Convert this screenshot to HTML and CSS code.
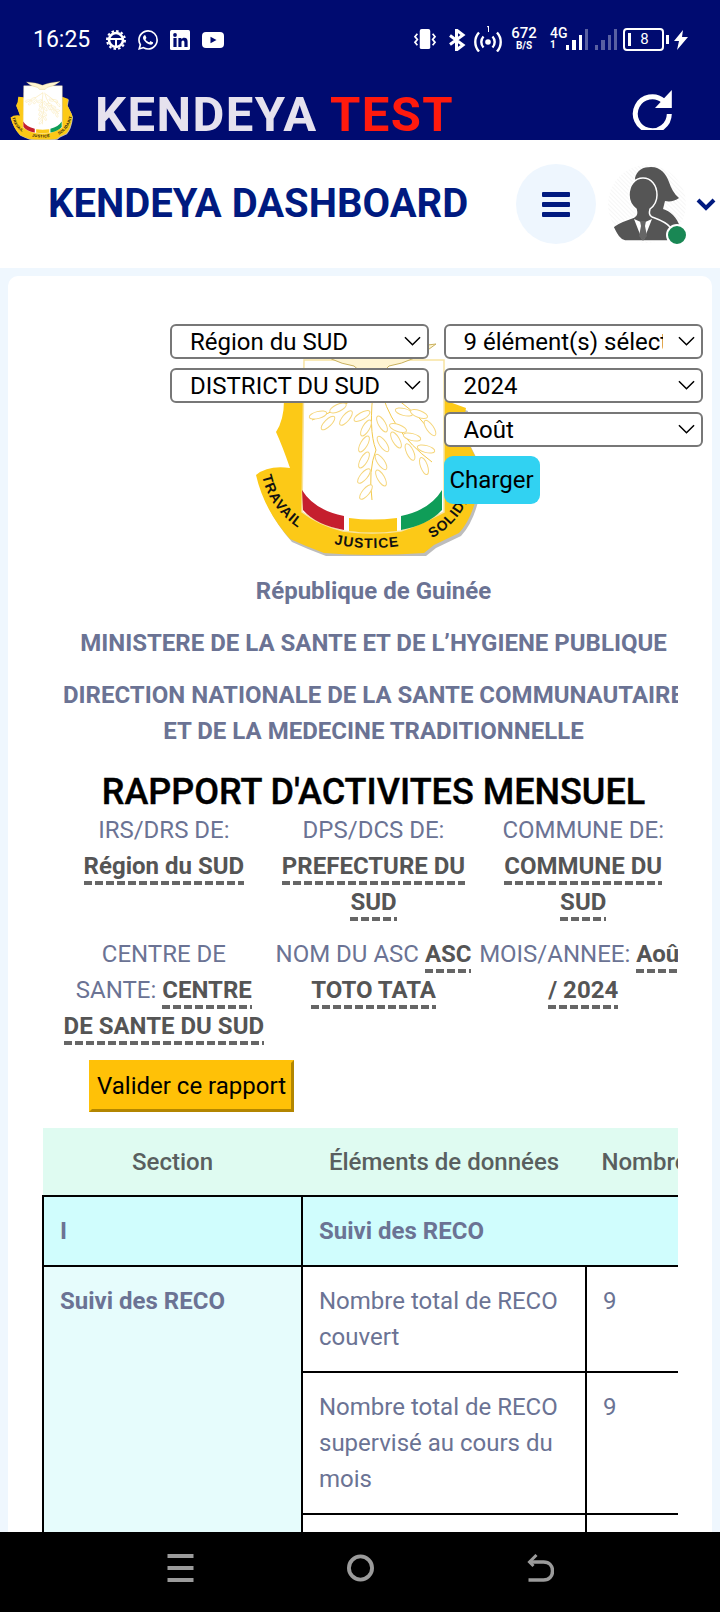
FILE: index.html
```html
<!DOCTYPE html>
<html lang="fr">
<head>
<meta charset="utf-8">
<title>Kendeya Dashboard</title>
<link rel="stylesheet" href="styles.css">
</head>
<body>
<div class="screen">
  <div class="status">
    <span class="time">16:25</span>
    <svg class="ic-gear" viewBox="0 0 20 20"><circle cx="10" cy="10" r="7" fill="none" stroke="#fff" stroke-width="2.6"/><circle cx="10" cy="10" r="9" fill="none" stroke="#fff" stroke-width="2" stroke-dasharray="2.5 2.2"/><path d="M4 9h12M10 9v7" stroke="#fff" stroke-width="2" fill="none"/></svg>
    <svg class="ic-soc" viewBox="0 0 24 24"><path fill="#fff" d="M17.472 14.382c-.297-.149-1.758-.867-2.03-.967-.273-.099-.471-.148-.67.15-.197.297-.767.966-.94 1.164-.173.199-.347.223-.644.075-.297-.15-1.255-.463-2.39-1.475-.883-.788-1.48-1.761-1.653-2.059-.173-.297-.018-.458.13-.606.134-.133.298-.347.446-.52.149-.174.198-.298.298-.497.099-.198.05-.371-.025-.52-.075-.149-.669-1.612-.916-2.207-.242-.579-.487-.5-.669-.51-.173-.008-.371-.01-.57-.01-.198 0-.52.074-.792.372-.272.297-1.04 1.016-1.04 2.479 0 1.462 1.065 2.875 1.213 3.074.149.198 2.096 3.2 5.077 4.487.709.306 1.262.489 1.694.625.712.227 1.36.195 1.871.118.571-.085 1.758-.719 2.006-1.413.248-.694.248-1.289.173-1.413-.074-.124-.272-.198-.57-.347m-5.421 7.403h-.004a9.87 9.87 0 01-5.031-1.378l-.361-.214-3.741.982.998-3.648-.235-.374a9.86 9.86 0 01-1.51-5.26c.001-5.45 4.436-9.884 9.888-9.884 2.64 0 5.122 1.03 6.988 2.898a9.825 9.825 0 012.893 6.994c-.003 5.45-4.437 9.884-9.885 9.884m8.413-18.297A11.815 11.815 0 0012.05 0C5.495 0 .16 5.335.157 11.892c0 2.096.547 4.142 1.588 5.945L.057 24l6.305-1.654a11.882 11.882 0 005.683 1.448h.005c6.554 0 11.89-5.335 11.893-11.893a11.821 11.821 0 00-3.48-8.413Z"/></svg>
    <svg class="ic-soc" viewBox="0 0 20 20"><rect width="20" height="20" rx="1.5" fill="#fff"/><circle cx="5" cy="5" r="1.9" fill="#000b70"/><path fill="#000b70" d="M3.4 8h3.2v9H3.4zM8.4 8h3v1.3c.6-.9 1.6-1.5 2.9-1.5 2.4 0 3.3 1.6 3.3 4V17h-3.2v-4.6c0-1.2-.4-2-1.4-2-1.100 0-1.500.9-1.500 2V17H8.400z"/></svg>
    <svg class="ic-yt" viewBox="0 0 22 16"><rect width="22" height="16" rx="4" fill="#fff"/><path d="M8.500 4.800 14.500 8l-6 3.200z" fill="#000b70"/></svg>
    <span class="grow"></span>
    <svg class="ic-vib" viewBox="0 0 24 22"><rect x="6.500" y="0" width="11" height="21" rx="2" fill="#fff"/><path d="M4 5 1.500 8 4 11 1.500 14 4 17M20 5l2.500 3-2.500 3 2.500 3-2.500 3" fill="none" stroke="#fff" stroke-width="1.800"/></svg>
    <svg class="ic-bt" viewBox="0 0 18 22"><path d="M2 6.500 15 16l-6.500 5V1L15 6 2 15.500" fill="none" stroke="#fff" stroke-width="3"/></svg>
    <svg class="ic-hot" viewBox="0 0 28 26"><circle cx="14" cy="16" r="2.800" fill="#fff"/><path d="M9.500 10.500a8 8 0 0 0 0 11M18.500 10.500a8 8 0 0 1 0 11M5 6.500a14 14 0 0 0 0 19M23 6.500a14 14 0 0 1 0 19" fill="none" stroke="#fff" stroke-width="2.400"/><path d="M13 1l1.500-1v6" fill="none" stroke="#fff" stroke-width="1"/></svg>
    <span class="speed"><b>672</b><i>B/S</i></span>
    <span class="net"><b>4G</b><i>1</i></span>
    <span class="bars">
      <span class="bar b1"></span><span class="bar b2"></span><span class="bar b3"></span><span class="bar b4 dim"></span>
    </span>
    <span class="bars second">
      <span class="bar b1 dim"></span><span class="bar b2 dim"></span><span class="bar b3 dim"></span><span class="bar b4 dim"></span>
    </span>
    <span class="battery"><span class="bat-level"></span><span class="bat-num">8</span></span>
    <span class="bat-tip"></span>
    <svg class="ic-bolt" viewBox="0 0 14 20"><path d="M9 0 0 11h5l-2 9 11-13H8z" fill="#fff"/></svg>
  </div>

  <div class="appbar">
    <svg class="logo-small" viewBox="0 0 240 216"><use href="#coat"/></svg>
    <span class="brand">KENDEYA <span class="brand-test">TEST</span></span>
    <span class="grow"></span>
    <svg class="ic-refresh" viewBox="0 0 40 40"><path d="M31.500 11A17 17 0 1 0 37.300 24" fill="none" stroke="#fff" stroke-width="5"/><path d="M39.800 0v18H23z" fill="#fff"/></svg>
  </div>

  <header class="topbar">
    <h1 class="top-title">KENDEYA DASHBOARD</h1>
    <button class="menu-btn" aria-label="Menu"><span></span><span></span><span></span></button>
    <span class="avatar">
      <svg class="avatar-img" viewBox="0 0 80 80">
        <defs><pattern id="hatch" width="3" height="3" patternUnits="userSpaceOnUse" patternTransform="rotate(45)"><path d="M0 0h3" stroke="#eee" stroke-width="1"/></pattern></defs>
        <circle cx="40" cy="40" r="39" fill="url(#hatch)"/>
        <path d="M28 14C30 6 36 3 44 3c10 0 15 7 18 15 2 6 5 12 10 16-4 3-9 4-14 3l-2 8c7 2 14 8 17 18v14H40z" fill="#555"/>
        <path d="M6 63c5-5 13-7 21-10 3-2 3-4 2-8-4-3-7-8-7-14 0-10 6-17 14-17s14 7 14 17c0 6-3 11-7 14-1 4-1 6 2 8 8 3 14 5 18 10l-2 14H18C12 76 9 69 6 63Z" fill="#555" stroke="#fff" stroke-width="1.500"/>
        <path d="M27 55l9 23 9-23-9 4z" fill="#fff"/><path d="M33 57h6l-1 5 2 10-4 5-4-5 2-10z" fill="#666"/>
      </svg>
      <span class="online"></span>
    </span>
    <svg class="chev" viewBox="0 0 20 14"><path d="M2 3l8 8 8-8" fill="none" stroke="#001a80" stroke-width="4"/></svg>
  </header>

  <main class="page">
    <section class="card">
      <form class="filters">
        <select class="sel"><option>Région du SUD</option></select>
        <select class="sel"><option>9 élément(s) sélectionné(s)</option></select>
        <select class="sel"><option>DISTRICT DU SUD</option></select>
        <select class="sel"><option>2024</option></select>
        <select class="sel sel-col2"><option>Août</option></select>
        <button type="button" class="load sel-col2">Charger</button>
      </form>

      <div class="clip">
        <svg class="emblem" viewBox="0 0 240 216">
          <defs>
            <ellipse id="leaf" rx="9" ry="3.500" fill="#fff" stroke="#f5d67c" stroke-width="1"/>
            <path id="sil" d="M30 60L50 62V150H190V60L212 68 208 90 222 118 227 132Q222 175 205 193L180 205 170 213Q115 217 70 213L52 206 36 199Q10 170 2 135 14 125 36 128 28 105 22 92 30 80 30 60Z"/>
            <path id="pathL" d="M8 136Q16 172 52 193"/>
            <path id="pathM" d="M80 204Q118 212 156 204"/>
            <path id="pathR" d="M178 198Q212 180 226 130"/>
            <g id="coat">
              <use href="#sil" fill="#bdbdbd" transform="translate(2 3)"/>
              <use href="#sil" fill="#fcc917"/>
              <path d="M50 20H190V172Q165 185 147 191 118 195 89 191 65 185 48 172Z" fill="#fff" stroke="#f7e3a1" stroke-width="1.500"/>
              <path d="M60 6Q95 8 118 18 140 8 182 4 160 22 135 26L128 33H108L100 26Q75 22 60 6Z" fill="#fff5d2" stroke="#c9b15f" stroke-width="1"/>
              <g fill="none" stroke="#f2c94c" stroke-width="1">
                <path d="M120 45Q90 68 58 80M120 45Q114 90 122 110 114 130 118 160M126 45Q135 90 178 122M130 50Q160 70 174 88"/>
              </g>
              <use href="#leaf" transform="translate(64 75) rotate(-15)"/>
              <use href="#leaf" transform="translate(74 83) rotate(-45)"/>
              <use href="#leaf" transform="translate(84 68) rotate(-25)"/>
              <use href="#leaf" transform="translate(92 78) rotate(-50)"/>
              <use href="#leaf" transform="translate(108 76) rotate(-30)"/>
              <use href="#leaf" transform="translate(112 88) rotate(-60)"/>
              <use href="#leaf" transform="translate(128 84) rotate(60)"/>
              <use href="#leaf" transform="translate(110 104) rotate(-60)"/>
              <use href="#leaf" transform="translate(129 104) rotate(55)"/>
              <use href="#leaf" transform="translate(110 120) rotate(-60)"/>
              <use href="#leaf" transform="translate(127 122) rotate(55)"/>
              <use href="#leaf" transform="translate(110 136) rotate(-50)"/>
              <use href="#leaf" transform="translate(127 138) rotate(60)"/>
              <use href="#leaf" transform="translate(112 152) rotate(-50)"/>
              <use href="#leaf" transform="translate(144 88) rotate(20)"/>
              <use href="#leaf" transform="translate(142 100) rotate(60)"/>
              <use href="#leaf" transform="translate(158 97) rotate(15)"/>
              <use href="#leaf" transform="translate(156 112) rotate(65)"/>
              <use href="#leaf" transform="translate(172 109) rotate(15)"/>
              <use href="#leaf" transform="translate(170 126) rotate(70)"/>
              <use href="#leaf" transform="translate(150 72) rotate(15)"/>
              <use href="#leaf" transform="translate(165 74) rotate(20)"/>
              <use href="#leaf" transform="translate(176 88) rotate(55)"/>
              <path d="M48 150Q60 170 90 176V190Q62 185 49 170Z" fill="#c51f2e"/>
              <path d="M95 178Q118 181 143 178V191Q118 194 95 191Z" fill="#fcc917"/>
              <path d="M188 150Q176 170 147 176V190Q174 185 188 170Z" fill="#0f9d58"/>
              <g class="motto">
                <text><textPath href="#pathL">TRAVAIL</textPath></text>
                <text><textPath href="#pathM">JUSTICE</textPath></text>
                <text><textPath href="#pathR">SOLIDARITE</textPath></text>
              </g>
            </g>
          </defs>
          <use href="#coat"/>
        </svg>

        <p class="line">République de Guinée</p>
        <p class="line">MINISTERE DE LA SANTE ET DE L’HYGIENE PUBLIQUE</p>
        <p class="line line-wide">DIRECTION NATIONALE DE LA SANTE COMMUNAUTAIRE ET DE LA MEDECINE TRADITIONNELLE</p>
        <h2 class="report-title">RAPPORT D'ACTIVITES MENSUEL</h2>

        <div class="meta">
          <div class="meta-cell">IRS/DRS DE: <span class="val">Région du SUD</span></div>
          <div class="meta-cell">DPS/DCS DE: <span class="val">PREFECTURE DU SUD</span></div>
          <div class="meta-cell">COMMUNE DE: <span class="val">COMMUNE DU SUD</span></div>
          <div class="meta-cell">CENTRE DE SANTE: <span class="val">CENTRE DE SANTE DU SUD</span></div>
          <div class="meta-cell">NOM DU ASC <span class="val">ASC TOTO TATA</span></div>
          <div class="meta-cell">MOIS/ANNEE: <span class="val">Août / 2024</span></div>
        </div>

        <button type="button" class="validate">Valider ce rapport</button>

        <table class="report">
          <colgroup><col class="c1"><col class="c2"><col class="c3"></colgroup>
          <thead>
            <tr><th>Section</th><th>Éléments de données</th><th>Nombre</th></tr>
          </thead>
          <tbody>
            <tr class="sec"><td>I</td><td colspan="2">Suivi des RECO</td></tr>
            <tr><td class="side" rowspan="3">Suivi des RECO</td><td>Nombre total de RECO couvert</td><td>9</td></tr>
            <tr><td>Nombre total de RECO supervisé au cours du mois</td><td>9</td></tr>
            <tr><td class="tall"></td><td class="tall"></td></tr>
          </tbody>
        </table>
      </div>
    </section>
  </main>

  <nav class="navbar">
    <svg class="nav-ic" viewBox="0 0 26 28"><path d="M0 2h26M0 14h26M0 26h26" stroke="#9b9b9b" stroke-width="4"/></svg>
    <svg class="nav-ic" viewBox="0 0 28 28"><circle cx="14" cy="14" r="12" fill="none" stroke="#9b9b9b" stroke-width="4"/></svg>
    <svg class="nav-ic" viewBox="0 0 26 28"><path d="M1 26h15c6 0 9-4 9-9s-3-9-9-9H2" fill="none" stroke="#9b9b9b" stroke-width="3.500"/><path d="M9 1 2 8l4 4" fill="none" stroke="#9b9b9b" stroke-width="3"/></svg>
  </nav>
</div>
</body>
</html>
```

FILE: styles.css
```css
* { box-sizing: border-box; }
html, body { margin: 0; padding: 0; height: 100%; }
body { font-family: Roboto, "Liberation Sans", sans-serif; font-size: 24px; line-height: 36px; color: #6b7394; }
.screen { width: 720px; height: 1612px; display: flex; flex-direction: column; overflow: hidden; background: #eff7fe; }
.grow { flex: 1; }

/* status bar */
.status { height: 76px; flex: none; background: #000b70; color: #fff; display: flex; align-items: center; padding: 3px 32px 0 33px; }
.time { font-size: 23px; line-height: 30px; width: 73px; }
.ic-gear { width: 20px; height: 20px; margin-right: 12px; }
.ic-soc { width: 20px; height: 20px; margin-right: 12px; }
.ic-yt { width: 22px; height: 16px; }
.ic-vib { width: 24px; height: 21px; margin-right: 11px; }
.ic-bt { width: 18px; height: 22px; margin-right: 8px; }
.ic-hot { width: 28px; height: 26px; margin-right: 10px; margin-top: -2px; }
.speed { width: 24px; display: flex; flex-direction: column; align-items: center; margin-right: 14px; margin-top: -2px; }
.speed b { font-size: 15px; line-height: 15px; font-weight: 500; }
.speed i { font-size: 10px; line-height: 10px; font-style: normal; font-weight: 700; }
.net { width: 16px; display: flex; flex-direction: column; margin-top: -4px; }
.net b { font-size: 14px; line-height: 14px; font-weight: 500; }
.net i { font-size: 10px; line-height: 9px; font-style: normal; font-weight: 700; }
.bars { display: flex; align-items: flex-end; gap: 3px; height: 21px; width: 22px; }
.bars.second { margin-left: 7px; margin-right: 6px; }
.bar { width: 4px; background: #fff; }
.bar.dim { opacity: .35; }
.b1 { height: 5px; }
.b2 { height: 10px; }
.b3 { height: 15px; }
.b4 { height: 21px; }
.battery { width: 41px; height: 23px; border: 2px solid #fff; border-radius: 4px; display: flex; align-items: center; position: relative; }
.bat-level { width: 3px; height: 13px; background: #fff; margin-left: 3px; }
.bat-num { flex: 1; text-align: center; font-size: 15px; line-height: 19px; padding-right: 4px; }
.bat-tip { width: 3px; height: 9px; background: #fff; margin: 0 5px 0 2px; }
.ic-bolt { width: 14px; height: 20px; }

/* app bar */
.appbar { height: 64px; flex: none; background: #000b70; display: flex; align-items: flex-end; padding: 0 48px 0 10px; }
.logo-small { width: 66px; height: 60px; margin-right: 19px; flex: none; }
.brand { font-family: Roboto, sans-serif; font-weight: 700; font-size: 49px; line-height: 50px; color: #e6e2ee; white-space: nowrap; letter-spacing: 1.4px; }
.brand-test { color: #ff1a0d; }
.ic-refresh { width: 40px; height: 40px; align-self: flex-start; margin-top: 14px; }

/* top bar */
.topbar { height: 128px; flex: none; background: #fff; display: flex; align-items: center; padding: 0 4px 0 48px; }
.top-title { margin: 0; font-size: 40px; line-height: 44px; font-weight: 700; color: #001a80; white-space: nowrap; flex: 1; }
.menu-btn { width: 80px; height: 80px; border: 0; border-radius: 50%; background: #eef6fe; display: flex; flex-direction: column; align-items: center; justify-content: center; gap: 5px; padding: 0; margin-right: 11px; }
.menu-btn span { width: 28px; height: 5px; background: #001a80; border-radius: 1px; }
.avatar { width: 80px; height: 80px; position: relative; flex: none; }
.avatar-img { width: 80px; height: 80px; display: block; }
.online { position: absolute; left: 59px; top: 60px; width: 22px; height: 22px; border-radius: 50%; background: #198754; border: 2px solid #fff; }
.chev { width: 20px; height: 14px; margin-left: 9px; flex: none; }

/* page */
.page { flex: 1; min-height: 0; overflow: hidden; padding: 8px 8px 0; }
.card { background: #fff; border-radius: 10px 10px 0 0; padding: 64px 34px 0 34px; position: relative; height: 100%; overflow: hidden; }
.clip { width: 636px; overflow: hidden; height: 100%; }

/* filters */
.filters { position: absolute; left: 162px; top: 48px; display: grid; grid-template-columns: 259px 259px; column-gap: 14.5px; row-gap: 9px; align-items: start; z-index: 2; }
.sel { appearance: none; -webkit-appearance: none; height: 35px; width: 259px; border: 2px solid #777; border-radius: 6px; font: 24px/31px Roboto, sans-serif; color: #000; padding: 1px 38px 0 18px; background: #fff url("data:image/svg+xml,%3Csvg xmlns='http://www.w3.org/2000/svg' viewBox='0 0 18 11'%3E%3Cpath d='M1 1l8 8 8-8' fill='none' stroke='%23000' stroke-width='1.600'/%3E%3C/svg%3E") no-repeat right 6px center / 17px 11px; }
.sel-col2 { grid-column: 2; }
.load { grid-column: 2; justify-self: start; width: 96px; height: 48px; background: #31d2f2; border: 0; border-radius: 9px; font: 24px/36px Roboto, sans-serif; color: #000; padding: 0; }

/* letterhead */
.emblem { display: block; width: 240px; height: 216px; margin: 0 0 17px 212px; }
.motto text { font: 700 14px "Liberation Sans", sans-serif; letter-spacing: 1px; fill: #111; }
.line { margin: 0 0 16px 17px; width: 629px; text-align: center; font-weight: 700; }
.line-wide { margin-bottom: 24px; }
.report-title { margin: 0 0 0 17px; width: 629px; text-align: center; color: #000; font-size: 36px; line-height: 39px; font-weight: 500; -webkit-text-stroke: .4px #000; }
.meta { margin-left: 17px; width: 629px; display: grid; grid-template-columns: repeat(3, 209.7px); row-gap: 16px; }
.meta-cell { text-align: center; padding: 0 3px; }
.meta-cell:nth-child(3n) { padding: 0; }
.val { color: #555; font-weight: 700; padding-bottom: 5px; background: repeating-linear-gradient(90deg, #666 0 8px, transparent 8px 11px) no-repeat left bottom / 100% 4px; -webkit-box-decoration-break: clone; box-decoration-break: clone; }
.validate { display: block; margin: 16px 0 16px 47px; width: 205px; height: 52px; background: #ffc107; border: 3px solid; border-color: #ffc107 #b38600 #b38600 #ffc107; font: 24px/36px Roboto, sans-serif; color: #000; padding: 0; }

/* table */
.report { border-collapse: collapse; table-layout: fixed; width: 660px; }
.c1 { width: 259px; }
.c2 { width: 284px; }
.c3 { width: 117px; }
.report th { height: 68px; background: #dffbf1; color: #595f5f; font-weight: 500; padding: 0; text-align: center; border-bottom: 2px solid #000; white-space: nowrap; }
.report td { padding: 16px; border: 2px solid #000; vertical-align: top; background: #fff; }
.sec td { background: #d0fdfd; font-weight: 700; }
.report td.side { background: #e6fcfc; font-weight: 700; }
.tall { height: 60px; }

/* nav bar */
.navbar { height: 80px; flex: none; background: #000; display: flex; justify-content: center; align-items: center; gap: 153px; padding-bottom: 8px; }
.nav-ic { width: 27px; height: 28px; }
```
